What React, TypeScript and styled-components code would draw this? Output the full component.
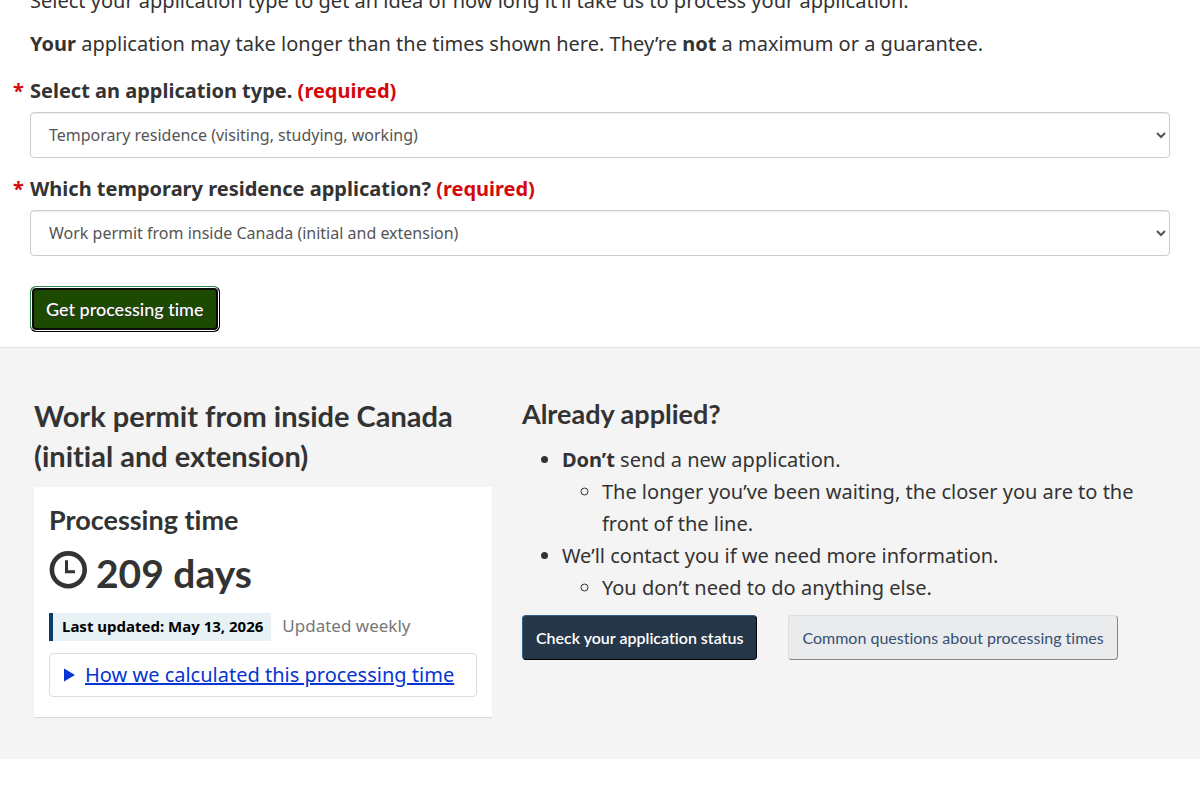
import React from "react";
import styled, { createGlobalStyle } from "styled-components";

const GlobalStyle = createGlobalStyle`
  *, *::before, *::after { box-sizing: border-box; }
  body {
    margin: 0;
    background: #fff;
    color: #333;
    font: 400 20px/32px "Noto Sans", sans-serif;
    font-variant-ligatures: none;
  }
`;

const Page = styled.main`
  overflow: hidden;
`;

const Form = styled.form`
  margin-top: -15px;
  padding: 0 30px 15px;
`;

const Paragraph = styled.p`
  margin: 0 0 11px;
`;

const Field = styled.div`
  margin-top: 15px;
`;

const Label = styled.label`
  display: block;
  margin: 0 0 5px -17px;
  font-weight: 700;
`;

const Required = styled.strong`
  color: #d3080c;
  font-weight: 700;
`;

const Star = styled.span`
  display: inline-block;
  width: 17px;
  color: #d3080c;
`;

const Select = styled.select`
  display: block;
  width: 100%;
  height: 46px;
  padding: 0 0 0 14px;
  border: 1px solid #ccc;
  border-radius: 4px;
  background: #fff;
  box-shadow: inset 0 1px 1px rgba(0, 0, 0, 0.075);
  color: #555;
  font: 400 16px/24px "Noto Sans", sans-serif;
`;

const SubmitButton = styled.button`
  display: block;
  height: 46px;
  margin-top: 30px;
  padding: 0 15px;
  border: 1px solid #000;
  border-top-color: #2f8a55;
  border-left-color: #2f8a55;
  border-radius: 6px;
  background: #1c4a00;
  box-shadow: inset 0 0 0 1px #fff, inset 0 0 0 3px #0b0b0b;
  color: #fff;
  font: 500 18px/24px Lato, sans-serif;
  font-variant-ligatures: none;
  text-shadow: 1px 1px 1px #333;
`;

const Results = styled.section`
  padding: 48px 10px 42px 19px;
  border-top: 1px solid #e3e3e3;
  background: #f4f4f4;
`;

const Row = styled.div`
  display: grid;
  grid-template-columns: minmax(0, 5fr) minmax(0, 7fr);
  align-items: start;
`;

const Column = styled.div`
  padding: 0 15px;
`;

const Title = styled.h2`
  margin: 0 0 11px;
  font: 700 29px/40px Lato, sans-serif;
  font-variant-ligatures: none;
`;

const Subtitle = styled.h3`
  margin: 0;
  font: 700 27px/36px Lato, sans-serif;
  font-variant-ligatures: none;
`;

const Card = styled.div`
  padding: 15px 15px 20px;
  background: #fff;
  box-shadow: 0 1px 1px rgba(0, 0, 0, 0.1);
`;

const Duration = styled.p`
  display: flex;
  align-items: center;
  gap: 8px;
  margin: 9px 0 14px;
  font: 700 39px/52px Lato, sans-serif;
  font-variant-ligatures: none;
`;

const ClockSvg = styled.svg`
  flex: none;
  width: 39px;
  height: 38px;
  margin-bottom: 6px;
`;

const Meta = styled.div`
  display: flex;
  align-items: center;
  gap: 11px;
  margin-bottom: 12px;
`;

const Updated = styled.span`
  padding: 0 8px 2px 9px;
  border-left: 4px solid #083c6b;
  background: #e8f2f4;
  color: #000;
  font-size: 15px;
  font-weight: 700;
  line-height: 26px;
`;

const Frequency = styled.span`
  padding-bottom: 2px;
  color: #777;
  font-size: 17px;
  line-height: 26px;
`;

const Details = styled.details`
  border: 1px solid #ddd;
  border-radius: 4px;
`;

const Summary = styled.summary`
  display: flex;
  align-items: center;
  gap: 10px;
  padding: 5px 14px;
  color: #0535d2;
  list-style: none;
  cursor: pointer;
  &::-webkit-details-marker { display: none; }
`;

const SummaryText = styled.span`
  text-decoration: underline;
`;

const List = styled.ul`
  margin: 0;
  padding-left: 40px;
`;

const Advice = styled.div`
  margin: 12px 0 11px;
`;

const Actions = styled.div`
  display: flex;
  flex-wrap: wrap;
  gap: 31px;
`;

const LinkButton = styled.a<{ $primary?: boolean }>`
  padding: 10px 13px;
  border: 1px solid;
  border-color: ${(p) => (p.$primary ? "#335f8a #000 #000 #335f8a" : "#dcdee1 #848587 #848587 #dcdee1")};
  border-radius: 4px;
  background: ${(p) => (p.$primary ? "#26374a" : "#eaebed")};
  color: ${(p) => (p.$primary ? "#fff" : "#335075")};
  font: ${(p) => (p.$primary ? 600 : 400)} 16px/23px Lato, sans-serif;
  font-variant-ligatures: none;
  text-decoration: none;
`;

function Clock() {
  return (
    <ClockSvg viewBox="0 0 39 38" aria-hidden="true">
      <circle cx="19.3" cy="18.8" r="16.4" fill="none" stroke="#333" strokeWidth="4.6" />
      <path d="M16 9.3h3v10h7v3h-10z" fill="#333" />
    </ClockSvg>
  );
}

function Triangle() {
  return (
    <svg width="11" height="14" viewBox="0 0 11 14" aria-hidden="true">
      <path d="M0 0.5L11 7L0 13.5z" fill="#0535d2" />
    </svg>
  );
}

function SelectField({ id, label, value }: { id: string; label: string; value: string }) {
  return (
    <Field>
      <Label htmlFor={id}>
        <Star aria-hidden="true">*</Star>
        {label} <Required>(required)</Required>
      </Label>
      <Select id={id} defaultValue={value} required>
        <option>{value}</option>
      </Select>
    </Field>
  );
}

export default function App() {
  return (
    <>
      <GlobalStyle />
      <Page>
        <Form onSubmit={(e) => e.preventDefault()}>
          <Paragraph>
            Select your application type to get an idea of how long it’ll take us to process your application.
          </Paragraph>
          <Paragraph>
            <strong>Your</strong> application may take longer than the times shown here. They’re{" "}
            <strong>not</strong> a maximum or a guarantee.
          </Paragraph>
          <SelectField
            id="application-type"
            label="Select an application type."
            value="Temporary residence (visiting, studying, working)"
          />
          <SelectField
            id="residence-application"
            label="Which temporary residence application?"
            value="Work permit from inside Canada (initial and extension)"
          />
          <SubmitButton type="submit">Get processing time</SubmitButton>
        </Form>
        <Results>
          <Row>
            <Column>
              <Title>Work permit from inside Canada (initial and extension)</Title>
              <Card>
                <Subtitle>Processing time</Subtitle>
                <Duration>
                  <Clock />
                  209 days
                </Duration>
                <Meta>
                  <Updated>Last updated: May 13, 2026</Updated>
                  <Frequency>Updated weekly</Frequency>
                </Meta>
                <Details>
                  <Summary>
                    <Triangle />
                    <SummaryText>How we calculated this processing time</SummaryText>
                  </Summary>
                </Details>
              </Card>
            </Column>
            <Column>
              <Subtitle>Already applied?</Subtitle>
              <Advice>
                <List>
                  <li>
                    <strong>Don’t</strong> send a new application.
                    <List>
                      <li>The longer you’ve been waiting, the closer you are to the front of the line.</li>
                    </List>
                  </li>
                  <li>
                    We’ll contact you if we need more information.
                    <List>
                      <li>You don’t need to do anything else.</li>
                    </List>
                  </li>
                </List>
              </Advice>
              <Actions>
                <LinkButton href="#status" $primary>
                  Check your application status
                </LinkButton>
                <LinkButton href="#questions">Common questions about processing times</LinkButton>
              </Actions>
            </Column>
          </Row>
        </Results>
      </Page>
    </>
  );
}
